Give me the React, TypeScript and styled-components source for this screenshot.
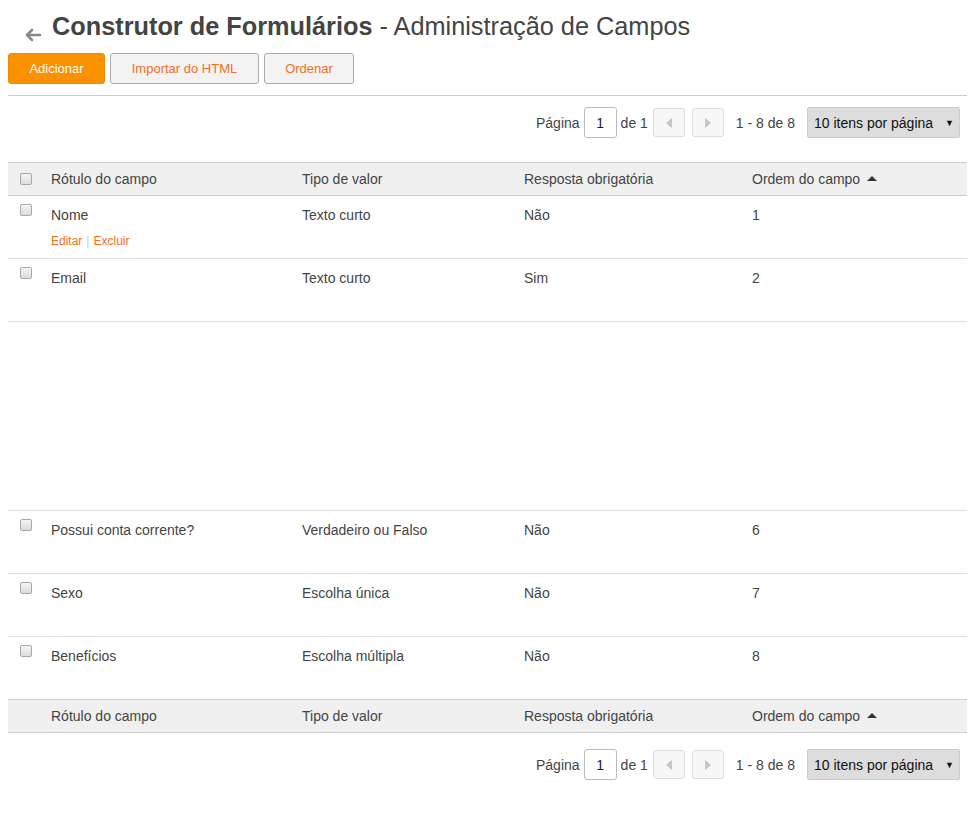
import React from "react";
import styled, { createGlobalStyle } from "styled-components";

const Global = createGlobalStyle`
  html, body { margin: 0; padding: 0; background: #fff; }
  body { font-family: "Liberation Sans", Arial, sans-serif; color: #444; font-size: 14px; }
  * { box-sizing: border-box; }
`;

const Page = styled.div`
  padding: 0 8px 8px 8px;
`;

const TitleRow = styled.div`
  display: flex;
  align-items: flex-end;
  height: 44px;
  padding-left: 16px;
`;

const BackIcon = styled.svg`
  width: 18px;
  height: 14px;
  margin-right: 10px;
  margin-bottom: 2px;
`;

const Title = styled.h1`
  margin: 0;
  font-size: 25.3px;
  font-weight: normal;
  color: #444;
  line-height: 30px;
  padding-bottom: 3px;
  b { font-weight: bold; }
`;

const Toolbar = styled.div`
  display: flex;
  gap: 5px;
  margin-top: 9px;
  padding-bottom: 11px;
  border-bottom: 1px solid #ccc;
`;

const Btn = styled.button<{ $primary?: boolean; $w: number }>`
  height: 31px;
  width: ${(p) => p.$w}px;
  border-radius: 3px;
  font-family: "Liberation Sans", Arial, sans-serif;
  font-size: 13px;
  padding: 0;
  cursor: pointer;
  border: 1px solid ${(p) => (p.$primary ? "#f08a00" : "#aaa")};
  background: ${(p) => (p.$primary ? "#fa9100" : "#f3f3f3")};
  color: ${(p) => (p.$primary ? "#fff" : "#f26f1c")};
`;

const Pager = styled.div<{ $top?: boolean }>`
  display: flex;
  justify-content: flex-end;
  align-items: center;
  height: 31px;
  margin-top: ${(p) => (p.$top ? 11 : 16)}px;
  padding-right: 7px;
  font-size: 14px;
  color: #444;
`;

const PageInput = styled.div`
  width: 33px;
  height: 31px;
  border: 1px solid #bbb;
  border-radius: 3px;
  display: flex;
  align-items: center;
  justify-content: center;
  color: #222;
  margin: 0 4px;
`;

const NavBtn = styled.div<{ $ml: number }>`
  width: 32px;
  height: 29px;
  border: 1px solid #ddd;
  border-radius: 3px;
  background: #f7f7f7;
  display: flex;
  align-items: center;
  justify-content: center;
  margin-left: ${(p) => p.$ml}px;
`;

const Range = styled.span`
  margin-left: 12px;
  margin-right: 12px;
`;

const Select = styled.div`
  width: 153px;
  height: 31px;
  background: #ddd;
  border: 1px solid #ccc;
  border-radius: 2px;
  display: flex;
  align-items: center;
  justify-content: space-between;
  padding: 0 5px 0 6px;
  color: #111;
  font-size: 14px;
`;

const Caret = styled.span`
  font-size: 9px;
  color: #111;
`;

const Table = styled.div`
  margin-top: 24px;
`;

const Cols = "43px 251px 222px 228px 1fr";

const HeadRow = styled.div<{ $noTop?: boolean }>`
  display: grid;
  grid-template-columns: ${Cols};
  height: ${(p) => (p.$noTop ? 33 : 34)}px;
  align-items: center;
  background: #f0f0f0;
  border-top: ${(p) => (p.$noTop ? "none" : "1px solid #ccc")};
  border-bottom: 1px solid #ccc;
  color: #444;
  font-size: 14px;
`;

const Row = styled.div<{ $hidden?: boolean; $line?: string }>`
  display: grid;
  grid-template-columns: ${Cols};
  height: 63px;
  align-content: start;
  border-bottom: 1px solid ${(p) => p.$line || "#ddd"};
  & > * {
    visibility: ${(p) => (p.$hidden ? "hidden" : "visible")};
  }
`;

const Cell = styled.div`
  padding-top: 11px;
  line-height: 16px;
  font-size: 14px;
  color: #444;
`;

const CheckCell = styled.div<{ $head?: boolean }>`
  padding-left: 12px;
  padding-top: ${(p) => (p.$head ? 0 : 8)}px;
  display: flex;
  align-items: ${(p) => (p.$head ? "center" : "flex-start")};
`;

const Check = styled.span`
  display: block;
  width: 12px;
  height: 12px;
  border: 1px solid #a8a8a8;
  border-radius: 2px;
  background: linear-gradient(#f4f4f4, #dcdcdc);
`;

const Actions = styled.div`
  margin-top: 10px;
  font-size: 12px;
  color: #f26f1c;
  span { color: #ccc; margin: 0 4px; }
`;

const Sort = styled.span`
  display: inline-block;
  width: 0;
  height: 0;
  border-left: 5px solid transparent;
  border-right: 5px solid transparent;
  border-bottom: 5px solid #333;
  margin-left: 7px;
  vertical-align: 3px;
`;

const Spacer = styled.div`
  height: 1px;
`;

type R = { n: string; t: string; r: string; o: string; actions?: boolean; hidden?: boolean; line?: string };

const rows: R[] = [
  { n: "Nome", t: "Texto curto", r: "Não", o: "1", actions: true },
  { n: "Email", t: "Texto curto", r: "Sim", o: "2" },
  { n: "Idade", t: "Número", r: "Não", o: "3", hidden: true, line: "transparent" },
  { n: "Telefone", t: "Texto curto", r: "Não", o: "4", hidden: true, line: "transparent" },
  { n: "Endereço", t: "Texto longo", r: "Não", o: "5", hidden: true },
  { n: "Possui conta corrente?", t: "Verdadeiro ou Falso", r: "Não", o: "6" },
  { n: "Sexo", t: "Escolha única", r: "Não", o: "7" },
  { n: "Benefícios", t: "Escolha múltipla", r: "Não", o: "8", line: "#ccc" },
];

const Arrow = ({ dir }: { dir: "l" | "r" }) => (
  <svg width="6" height="10" viewBox="0 0 6 10">
    {dir === "l" ? (
      <polygon points="6,0 6,10 0,5" fill="#c4c4c4" />
    ) : (
      <polygon points="0,0 0,10 6,5" fill="#c4c4c4" />
    )}
  </svg>
);

const Pagination = ({ top }: { top?: boolean }) => (
  <Pager $top={top}>
    <span>Página</span>
    <PageInput>1</PageInput>
    <span>de 1</span>
    <NavBtn $ml={5}>
      <Arrow dir="l" />
    </NavBtn>
    <NavBtn $ml={7}>
      <Arrow dir="r" />
    </NavBtn>
    <Range>1 - 8 de 8</Range>
    <Select>
      <span>10 itens por página</span>
      <Caret>▼</Caret>
    </Select>
  </Pager>
);

const Header = ({ withCheck, noTop }: { withCheck?: boolean; noTop?: boolean }) => (
  <HeadRow $noTop={noTop}>
    <CheckCell $head>{withCheck && <Check />}</CheckCell>
    <div>Rótulo do campo</div>
    <div>Tipo de valor</div>
    <div>Resposta obrigatória</div>
    <div>
      Ordem do campo
      <Sort />
    </div>
  </HeadRow>
);

export default function App() {
  return (
    <Page>
      <Global />
      <TitleRow>
        <BackIcon viewBox="0 0 18 14">
          <path
            d="M16 7H3M8 2L3 7l5 5"
            stroke="#888"
            strokeWidth="2.6"
            fill="none"
            strokeLinecap="round"
            strokeLinejoin="round"
          />
        </BackIcon>
        <Title>
          <b>Construtor de Formulários</b> - Administração de Campos
        </Title>
      </TitleRow>
      <Toolbar>
        <Btn $primary $w={97}>Adicionar</Btn>
        <Btn $w={149}>Importar do HTML</Btn>
        <Btn $w={90}>Ordenar</Btn>
      </Toolbar>
      <Pagination top />
      <Table>
        <Header withCheck />
        {rows.map((r, i) => (
          <Row key={i} $hidden={r.hidden} $line={r.line}>
            <CheckCell>
              <Check />
            </CheckCell>
            <Cell>
              {r.n}
              {r.actions && (
                <Actions>
                  Editar<span>|</span>Excluir
                </Actions>
              )}
            </Cell>
            <Cell>{r.t}</Cell>
            <Cell>{r.r}</Cell>
            <Cell>{r.o}</Cell>
          </Row>
        ))}
        <Header noTop />
      </Table>
      <Pagination />
      <Spacer />
    </Page>
  );
}
